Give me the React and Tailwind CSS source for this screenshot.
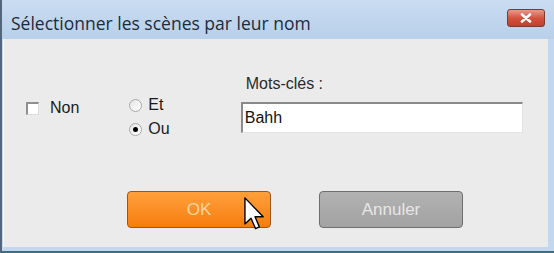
import React from 'react';

const Cursor = () => (
    <svg className="absolute left-[242px] top-[197px]" width="21" height="33" viewBox="0 0 12 19">
        <path
            d="M0.5 0.5 L0.5 15.5 L4 12.2 L6.6 18.2 L8.8 17.2 L6.3 11.4 L11 11.4 Z"
            fill="#fff"
            stroke="#000"
            strokeWidth="0.8"
            strokeLinejoin="round"
        />
    </svg>
);

const Radio = ({ checked }) => (
    <div className="w-[13px] h-[13px] rounded-full border border-[#a9a9a9] bg-gradient-to-br from-[#e4e4e4] to-white flex items-center justify-center">
        {checked && <div className="w-[5px] h-[5px] rounded-full bg-black" />}
    </div>
);

export default function App() {
    return (
        <div className="relative w-[554px] h-[253px] overflow-hidden flex flex-col bg-[#c3d8ee] border-l-2 border-l-[#55667a] border-b-2 border-b-[#3f6c80]" style={{ fontFamily: '"Liberation Sans", Arial, sans-serif' }}>
            {/* Title bar */}
            <div className="h-[39px] flex items-start justify-between pl-[9px] pr-[9px] bg-gradient-to-b from-[#c9dcf1] to-[#b9d0ea]">
                <span className="mt-[10px] text-[17.5px] leading-[26px] text-[#1c2b3b]" style={{ fontFamily: '"Open Sans", "Noto Sans", sans-serif' }}>
                    Sélectionner les scènes par leur nom
                </span>
                <div className="mt-[9px] w-[38px] h-[18px] rounded-[3px] border border-[#7a3a30] bg-gradient-to-b from-[#e79a8c] via-[#d2533f] to-[#c23f2b] flex items-center justify-center">
                    <svg width="12" height="10" viewBox="0 0 12 10">
                        <path d="M2 1.5 L10 8.5 M10 1.5 L2 8.5" stroke="#fff" strokeWidth="2.6" strokeLinecap="round" />
                    </svg>
                </div>
            </div>

            {/* Body */}
            <div className="flex-1 mr-[6px] mb-[4px] ml-[1px] bg-[#ebebeb] border-l border-[#f7f7f7] flex flex-col">
                <div className="flex items-start">
                    <div className="flex items-center gap-[11px] ml-[22px] mt-[60px]">
                        <div className="w-[13px] h-[13px] bg-white border-t-2 border-l-2 border-[#8f8f8f] border-r border-b border-r-[#dcdcdc] border-b-[#dcdcdc]" />
                        <span className="text-[16px] leading-[18px] text-[#1a1a1a]">Non</span>
                    </div>
                    <div className="flex flex-col gap-[6px] ml-[50px] mt-[57px]">
                        <div className="flex items-center gap-[6px]">
                            <Radio />
                            <span className="text-[16px] leading-[18px] text-[#1a1a1a]">Et</span>
                        </div>
                        <div className="flex items-center gap-[6px]">
                            <Radio checked />
                            <span className="text-[16px] leading-[18px] text-[#1a1a1a]">Ou</span>
                        </div>
                    </div>
                    <div className="flex flex-col ml-[71px] mt-[36px]">
                        <span className="text-[16px] text-[#2a2a2a] ml-[5px] leading-[18px]">Mots-clés :</span>
                        <div className="mt-[9px] w-[282px] h-[31px] bg-white border-t-2 border-l-2 border-[#8a8a8a] border-r border-b border-r-[#e2e2e2] border-b-[#e2e2e2] flex items-center px-[2px]">
                            <span className="text-[16px] text-[#111]">Bahh</span>
                        </div>
                    </div>
                </div>

                <div className="flex mt-[53px] ml-[123px] gap-[48px]">
                    <div className="w-[144px] h-[37px] rounded-[4px] border border-[#9c5520] bg-gradient-to-b from-[#ffa03a] to-[#f77d05] flex items-center justify-center">
                        <span className="text-[17px] text-[#ffd6a0]">OK</span>
                    </div>
                    <div className="w-[144px] h-[37px] rounded-[4px] border border-[#6e6e6e] bg-gradient-to-b from-[#b2b2b2] to-[#a2a2a2] flex items-center justify-center">
                        <span className="text-[17px] text-[#e6e6e6]">Annuler</span>
                    </div>
                </div>
            </div>

            <Cursor />
        </div>
    );
}
